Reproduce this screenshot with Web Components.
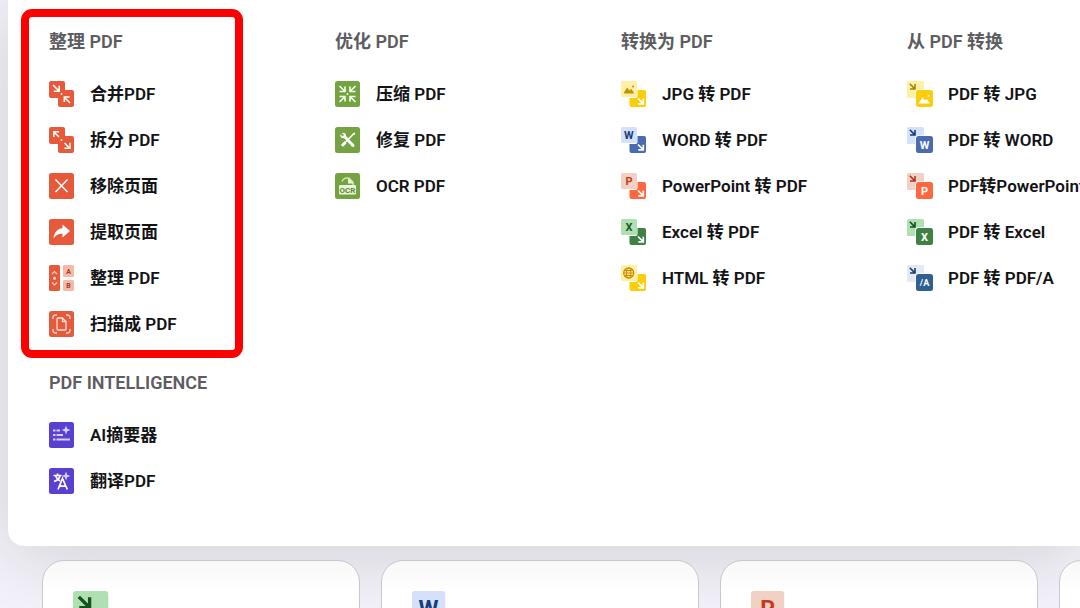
<!DOCTYPE html>
<html lang="zh-CN">
<head>
<meta charset="UTF-8">
<meta name="viewport" content="width=device-width, initial-scale=1.0">
<title>PDF</title>
<style>
    :root{
        --text: #131316;
        --heading: #5c5c61;
        --page: #f4f3fb;
    }

    body{
        margin: 0;
        overflow: hidden;
        background: var(--page);
        color: var(--text);
        font-family: Roboto, "Noto Sans CJK SC", sans-serif;
    }
</style>
</head>
<body>
    <mega-menu>
        <menu-column>
            <menu-group label="整理 PDF" marked>
                <menu-item icon="merge">合并PDF</menu-item>
                <menu-item icon="split">拆分 PDF</menu-item>
                <menu-item icon="remove">移除页面</menu-item>
                <menu-item icon="extract">提取页面</menu-item>
                <menu-item icon="organize">整理 PDF</menu-item>
                <menu-item icon="scan">扫描成 PDF</menu-item>
            </menu-group>
            <menu-group label="PDF INTELLIGENCE">
                <menu-item icon="summary">AI摘要器</menu-item>
                <menu-item icon="translate">翻译PDF</menu-item>
            </menu-group>
        </menu-column>
        <menu-column>
            <menu-group label="优化 PDF">
                <menu-item icon="compress">压缩 PDF</menu-item>
                <menu-item icon="repair">修复 PDF</menu-item>
                <menu-item icon="ocr">OCR PDF</menu-item>
            </menu-group>
        </menu-column>
        <menu-column>
            <menu-group label="转换为 PDF">
                <menu-item icon="from-jpg">JPG 转 PDF</menu-item>
                <menu-item icon="from-word">WORD 转 PDF</menu-item>
                <menu-item icon="from-ppt">PowerPoint 转 PDF</menu-item>
                <menu-item icon="from-excel">Excel 转 PDF</menu-item>
                <menu-item icon="from-html">HTML 转 PDF</menu-item>
            </menu-group>
        </menu-column>
        <menu-column>
            <menu-group label="从 PDF 转换">
                <menu-item icon="to-jpg">PDF 转 JPG</menu-item>
                <menu-item icon="to-word">PDF 转 WORD</menu-item>
                <menu-item icon="to-ppt">PDF转PowerPoint</menu-item>
                <menu-item icon="to-excel">PDF 转 Excel</menu-item>
                <menu-item icon="to-pdfa">PDF 转 PDF/A</menu-item>
            </menu-group>
        </menu-column>
    </mega-menu>

    <tool-cards>
        <tool-card><tool-icon name="to-excel"></tool-icon></tool-card>
        <tool-card><tool-icon name="from-word"></tool-icon></tool-card>
        <tool-card><tool-icon name="from-ppt"></tool-icon></tool-card>
        <tool-card></tool-card>
    </tool-cards>

<script>
// every icon is drawn on a 26 x 26 grid
const tile = (color) => `<rect width="25" height="26" rx="2.5" fill="${color}"/>`;

const pair = (color) => `<path fill="${color}" d="M2 0h12a2 2 0 0 1 2 2v7h7a2 2 0 0 1 2 2v13a2 2 0 0 1-2 2H11a2 2 0 0 1-2-2v-7H2a2 2 0 0 1-2-2V2a2 2 0 0 1 2-2z"/>`;

const line = (d, color = "#fff", width = 1.5) => `<path d="${d}" fill="none" stroke="${color}" stroke-width="${width}"/>`;

const letter = (x, y, size, color, text) =>
    `<text x="${x}" y="${y}" font-size="${size}" font-weight="700" fill="${color}" text-anchor="middle">${text}</text>`;

// light source file on top, dark PDF tile with the arrow below it
const fromFile = (light, dark, art) => `
    <rect x="8.5" y="9" width="16.5" height="17" rx="2" fill="${dark}"/>
    <rect x="-1" y="-1" width="17.5" height="18" rx="2" fill="#fff"/>
    <rect width="16" height="16" rx="1.5" fill="${light}"/>
    ${line("M17 17.5l5 5M22.3 17.8v5h-5", "#fff", 1.7)}${art}`;

// light PDF tile with the arrow, dark target file on top
const toFile = (light, dark, arrow, art) => `
    <rect width="17" height="17" rx="1.5" fill="${light}"/>
    ${line("M2.8 2.8l4.8 4.8M8 3v5H3", arrow, 1.6)}
    <rect x="8.3" y="8.3" width="19" height="19" rx="3" fill="#fff"/>
    <rect x="9" y="9" width="17" height="17" rx="2.5" fill="${dark}"/>${art}`;

const red = "#e65a3b";
const green = "#75a343";
const violet = "#5a40d0";
const sparkle = `<path fill="#d9ccff" d="M17 3.500l1.200 3.300 3.300 1.200-3.300 1.200-1.200 3.300-1.200-3.300-3.300-1.200 3.300-1.200z"/>`;

const icons = {
    "merge": pair(red) + line("M4 4l6 6M10.2 4.8v5.4H4.8M21 22l-5.5-5.5M15.3 21v-4.9h5.2") + `<circle cx="12.5" cy="13" r=".9" fill="#fff"/>`,
    "split": pair(red) + line("M10 10L5 5M4.8 10V4.7h5.3M15.5 16l5.2 5.2M21 15.7v5.6h-5.6") + `<circle cx="12.5" cy="13" r=".9" fill="#fff"/>`,
    "remove": tile(red) + line("M6.5 6.5l12 12.5M18.5 6.5L6.5 19"),
    "extract": tile(red) + `<path fill="#fff" d="M13.5 5.5L21 12l-7.500 6.500v-3.700C9.500 14.500 6.500 16 4.500 19.500 5 14 8 9.500 13.500 9.200z"/>`,
    "organize": `<rect width="11" height="26" rx="1.500" fill="${red}"/>
        <rect x="14" width="11" height="12" rx="1.500" fill="#f5b9a8"/>
        <rect x="14" y="15" width="11" height="11" rx="1.500" fill="#f5b9a8"/>
        ${line("M3 9l2.500-2.500L8 9M3 17.500L5.500 20 8 17.500", "#ffd5ca", 1.2)}<circle cx="5.500" cy="13.300" r="1.500" fill="#ffe2d9"/>
        ${letter(19.5, 8.6, 7, "#a63a2b", "A")}${letter(19.5, 23, 7, "#a63a2b", "B")}`,
    "scan": tile(red) + line("M4 8V6.500A2.500 2.500 0 0 1 6.500 4H8M17 4h1.500A2.500 2.500 0 0 1 21 6.500V8M21 18v1.500a2.500 2.500 0 0 1-2.500 2.500H17M8 22H6.500A2.500 2.500 0 0 1 4 19.500V18", "#ffd9cf", 1.3)
        + line("M9.500 7h4l3.500 3.500V18a1 1 0 0 1-1 1H9a1 1 0 0 1-1-1V8a1 1 0 0 1 1-1zM13.500 7v3.500H17", "#ffe2da", 1.3),
    "summary": tile(violet) + sparkle + line("M4 8.500h2.500M7.500 8.500h3.500M4 13h2.500M7.500 13H14M4 17.500h2.500M7.500 17.500H21", "#d9ccff", 1.9),
    "translate": tile(violet) + line("M4.500 7.500h8M8.500 5.500v2M11 7.500c-.5 3-3 5-6 6M6.500 8c1 2.500 3 4 4.500 5", "#fff", 1.6)
        + line("M9 21.500l4.500-11 4.800 11M10.500 18.200h6.300", "#fff", 1.7) + sparkle,
    "compress": tile(green) + line("M4.500 5l5.300 5.300M10 5.500v5H4.500M20.500 5l-5.300 5.300M15 5.500v5h5.500M4.500 21l5.300-5.300M10 20.500v-5H4.500M20.500 21l-5.300-5.300M15 20.500v-5h5.500", "#f4ffe8", 1.6)
        + `<circle cx="12.500" cy="13" r=".9" fill="#fff"/>`,
    "repair": tile(green) + line("M9 9l9 9.500", "#fff", 3) + line("M18.500 7L7 18.800", "#fff", 1.5) + line("M7 18.800l3.500-3.500", "#fff", 3)
        + `<circle cx="8.200" cy="8.500" r="2.800" fill="#fff"/><path fill="${green}" d="M5 4.500l4 3.500-1.500 1.500L4.500 6z"/>
        <path fill="#fff" d="M17.500 6.500l2-1 .8.8-1 2z"/><circle cx="18" cy="18.500" r="1.500" fill="#fff"/>`,
    "ocr": tile(green) + line("M7 8.500C8.500 5.500 11 4.500 14 5l4 4v3", "#dff0c8", 1.2) + `<path fill="#e8f5d8" d="M13 5l6 5.500h-6z"/>
        <rect x="4" y="12" width="17" height="9.500" rx="1" fill="#e8f5d8"/>` + letter(12.5, 19.6, 8, "#5e8a30", "OCR"),
    "from-jpg": fromFile("#fff0a3", "#fccd0b", `<path fill="#bd9405" d="M2.500 12.500l3.500-6 2.500 3 1.800-1.800 3 4.800z"/><circle cx="12" cy="5.500" r="1" fill="#bd9405"/>`),
    "from-word": fromFile("#d5e0fb", "#4a6bb0", letter(7.9, 12.2, 11, "#183d78", "W")),
    "from-ppt": fromFile("#f2d0c3", "#ff673f", letter(8, 12.2, 11, "#c33c20", "P")),
    "from-excel": fromFile("#afe0b1", "#3f8145", letter(7.9, 12.2, 11, "#225b2a", "X")),
    "from-html": fromFile("#fff0a3", "#fccd0b", `<circle cx="7.700" cy="8" r="5" fill="none" stroke="#d08a00" stroke-width="1.300"/>
        <ellipse cx="7.700" cy="8" rx="2.200" ry="5" fill="none" stroke="#d08a00"/>${line("M2.700 8h10M3.500 5.500h8.400M3.500 10.500h8.400", "#d08a00", 1)}`),
    "to-jpg": toFile("#fff0a3", "#fccd0b", "#a98506", `<path fill="#fff" d="M11.500 22.500l4-6 2.500 3 1.500-1.500 3.500 4.500z"/><circle cx="21.500" cy="15" r="1" fill="#fff"/>`),
    "to-word": toFile("#d5e0fb", "#4a6bb0", "#183d78", letter(17.5, 21.7, 11, "#fff", "W")),
    "to-ppt": toFile("#f2d0c3", "#ff673f", "#b2361e", letter(17.5, 21.5, 11, "#fff", "P")),
    "to-excel": toFile("#afe0b1", "#3f8145", "#14521f", letter(17.5, 21.7, 11, "#fff", "X")),
    "to-pdfa": toFile("#e3eaf4", "#315f92", "#173f70", letter(17.5, 20.8, 9, "#fff", "/A"))
};

class ToolIcon extends HTMLElement{
    constructor(){
        super();
        this.attachShadow({ mode: "open" });
    }
    connectedCallback(){
        this.shadowRoot.innerHTML = `
        <style>
        :host{
            display: block;
            flex: none;
            width: var(--icon-size, 26px);
            height: var(--icon-size, 26px);
        }

        svg{
            display: block;
            width: 100%;
            height: 100%;
            font-family: "Liberation Sans Narrow", Roboto, sans-serif;
        }
        </style>
        <svg viewBox="0 0 26 26" aria-hidden="true">${icons[this.getAttribute("name")] || ""}</svg>
        `;
    }
}

class MenuItem extends HTMLElement{
    constructor(){
        super();
        this.attachShadow({ mode: "open" });
    }
    connectedCallback(){
        this.shadowRoot.innerHTML = `
        <style>
        :host{
            display: block;
        }

        a{
            display: flex;
            align-items: center;
            gap: 15px;
            height: 46px;
            color: inherit;
            font-size: 17px;
            font-weight: 600;
            line-height: 46px;
            white-space: nowrap;
            text-decoration: none;
        }

        a:hover{
            color: #e5322d;
        }
        </style>
        <a href="#${this.getAttribute("icon")}">
            <tool-icon name="${this.getAttribute("icon")}"></tool-icon>
            <span><slot></slot></span>
        </a>
        `;
    }
}

class MenuGroup extends HTMLElement{
    constructor(){
        super();
        this.attachShadow({ mode: "open" });
    }
    connectedCallback(){
        this.shadowRoot.innerHTML = `
        <style>
        :host{
            display: block;
            position: relative;
        }

        h2{
            margin: 0 0 11px;
            font-size: 18px;
            font-weight: 600;
            line-height: 36px;
            white-space: nowrap;
            color: var(--heading);
        }

        /* red frame round the highlighted group */
        :host([marked])::after{
            content: "";
            position: absolute;
            inset: -15px 92px -11px -28px;
            border: 8px solid #fe0000;
            border-radius: 11px;
            pointer-events: none;
        }
        </style>
        <h2>${this.getAttribute("label")}</h2>
        <nav aria-label="${this.getAttribute("label")}"><slot></slot></nav>
        `;
    }
}

class MenuColumn extends HTMLElement{
    constructor(){
        super();
        const shadow = this.attachShadow({ mode: "open" });

        shadow.innerHTML = `
        <style>
        :host{
            display: flex;
            flex-direction: column;
            gap: 18px;
        }
        </style>
        <slot></slot>
        `;
    }
}

class MegaMenu extends HTMLElement{
    constructor(){
        super();
        const shadow = this.attachShadow({ mode: "open" });

        shadow.innerHTML = `
        <style>
        :host{
            display: grid;
            grid-auto-flow: column;
            grid-auto-columns: minmax(286px, 1fr);
            margin-left: 8px;
            padding: 24px 0 42px 41px;
            background: #fff;
            border-radius: 0 0 0 16px;
            box-shadow: 0 8px 80px rgba(24, 24, 0, 0.17);
        }
        </style>
        <slot></slot>
        `;
    }
}

class ToolCards extends HTMLElement{
    constructor(){
        super();
        const shadow = this.attachShadow({ mode: "open" });

        shadow.innerHTML = `
        <style>
        :host{
            display: grid;
            position: relative;
            grid-auto-flow: column;
            grid-auto-columns: minmax(318px, 1fr);
            gap: 21px;
            padding: 14px 0 40px 42px;
        }
        </style>
        <slot></slot>
        `;
    }
}

class ToolCard extends HTMLElement{
    constructor(){
        super();
        const shadow = this.attachShadow({ mode: "open" });

        shadow.innerHTML = `
        <style>
        :host{
            --icon-size: 54px;
            box-sizing: border-box;
            display: block;
            min-height: 240px;
            padding: 30px;
            border: 1px solid #c8c8cd;
            border-radius: 22px;
            background: linear-gradient(#f8f8f9, #fff 32px);
        }
        </style>
        <slot></slot>
        `;
    }
}

customElements.define("tool-icon", ToolIcon);
customElements.define("menu-item", MenuItem);
customElements.define("menu-group", MenuGroup);
customElements.define("menu-column", MenuColumn);
customElements.define("mega-menu", MegaMenu);
customElements.define("tool-cards", ToolCards);
customElements.define("tool-card", ToolCard);
</script>
</body>
</html>
